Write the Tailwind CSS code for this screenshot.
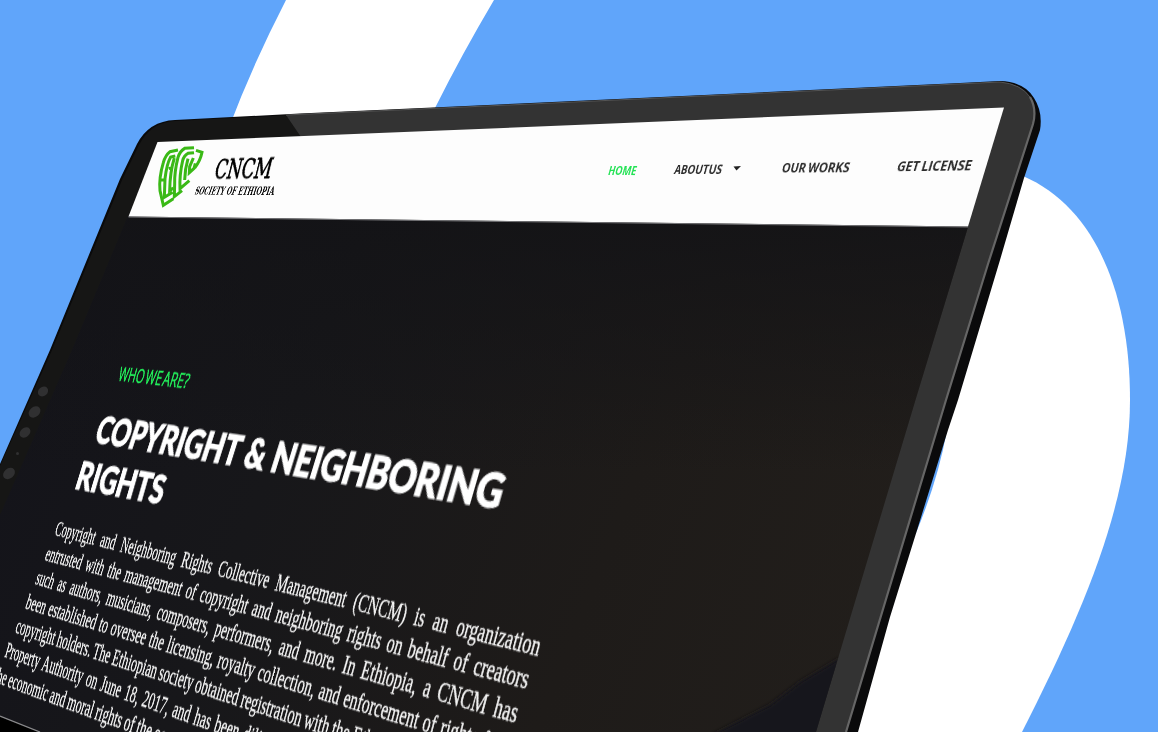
<!DOCTYPE html>
<html lang="en">
<head>
<meta charset="utf-8">
<title>CNCM Society of Ethiopia</title>
<script src="https://cdn.jsdelivr.net/npm/@tailwindcss/browser@4"></script>
</head>
<body class="bg-[#60a5fa]">
<main class="relative w-[1158px] h-[732px] overflow-hidden bg-[#60a5fa]">
  <svg class="absolute inset-0" width="1158" height="732" viewBox="0 0 1158 732">
    <defs>
      <linearGradient id="screen" x1="0" y1="0.3" x2="1" y2="0.55">
        <stop offset="0" stop-color="#13131a"/><stop offset=".3" stop-color="#17171a"/><stop offset=".6" stop-color="#1e1b19"/><stop offset="1" stop-color="#24201c"/>
      </linearGradient>
      <linearGradient id="shade" x1="0" y1="0" x2="0" y2="1">
        <stop offset="0" stop-color="#131316" stop-opacity=".85"/><stop offset=".5" stop-color="#131316" stop-opacity="0"/>
      </linearGradient>
      <filter id="soft"><feGaussianBlur stdDeviation="2"/></filter>
      <clipPath id="panel"><path d="M128 216L968 227L915.5 400L816 732H40L0 716V515L72 350Z"/></clipPath>
    </defs>
    <!-- white ribbons -->
    <path d="M286 0H494Q462 54 435 108L400 130H228Q252 66 286 0Z" fill="#fff"/>
    <path d="M1015 173C1090 200 1130 285 1130 400C1130 500 1086 606 1022 732H850L900 500L950 300Z" fill="#fff"/>
    <path d="M947 430Q938 480 916 533L920 500Z" fill="#60a5fa"/>
    <!-- tablet body -->
    <path d="M0 464L50 350L120 179L137 144Q149 121 175 120L300 113.500L520 103.500L960 83L1000 81Q1025 82 1034 98Q1043 112 1040 130L1024 178L1000 260L958 400L948 430L918 527L890 617L858 732H0Z" fill="#0a0a0b"/>
    <path d="M175 121L300 114.500L520 104.500L1000 82Q1021 84 1030 97Q1037 109 1033 124L988 264L946 400L846 732H0V466L52 350L122 180L139 145Q151 122 175 121Z" fill="#161615"/>
    <path d="M286 115L520 104.500L1000 82Q1021 84 1030 97Q1037 109 1033 124L988 264L946 400L846 732H800L930 300L968 110L301 137Z" fill="#333"/>
    <path d="M286 115L520 104.500L1000 82Q1021 84 1030 97Q1037 109 1033 124" fill="none" stroke="#555" stroke-width="1"/>
    <path d="M1030 97Q1037 109 1033 124L988 264L946 400L846 732" fill="none" stroke="#666" stroke-width="2.200"/>
    <g fill="#303031">
      <ellipse cx="43" cy="391.500" rx="5.500" ry="4.500" transform="rotate(-40 43 391.500)"/>
      <ellipse cx="34.500" cy="412" rx="6.500" ry="5" transform="rotate(-40 34.500 412)"/>
      <ellipse cx="25" cy="432.500" rx="6" ry="4.500" transform="rotate(-40 25 432.500)"/>
      <ellipse cx="9" cy="473.500" rx="6.500" ry="5" transform="rotate(-40 9 473.500)"/>
      <circle cx="17.500" cy="453.500" r="1.500"/>
    </g>
    <!-- screen -->
    <g clip-path="url(#panel)">
      <rect width="1158" height="732" fill="url(#screen)"/>
      <rect y="216" width="1158" height="516" fill="url(#shade)"/>
      <path d="M712 735L770 705L800 682L840 658V735Z" fill="#17151b" filter="url(#soft)"/>
    </g>
    <path d="M157.500 142L1004 107.500L968 226.500L128.500 216.500Z" fill="#fdfdfd"/>
    <path d="M128.500 217L968 227" stroke="#77777a" stroke-width="1"/>
    <path d="M0 717L38 732H0Z" fill="#000"/><path d="M0 716L40 732" stroke="#8a8a8d" stroke-width="1.300"/>
    <!-- shield -->
    <g transform="translate(120 100) scale(.33333)" fill="none" stroke="#3ab916" stroke-width="9">
      <path d="M174 150L150 155Q136 166 130 188Q116 235 120 272L130 316L160 296"/>
      <path d="M166 168L152 171Q140 192 135 236L133 292L158 277M120 240H134"/>
      <path d="M163 174Q150 215 149 272L160 264M146 206L156 203"/>
      <path d="M222 143L194 145Q180 153 174 172Q163 215 164 252L163 290L186 272"/>
      <path d="M222 158L204 160Q192 166 188 182Q178 225 180 266L208 242"/>
      <path d="M204 176Q195 206 194 240M220 174L209 200L208 218L222 205L226 190"/>
      <path d="M228 151L246 157Q241 183 224 204"/>
    </g>
    <path d="M733.500 166.500L741 166L736.500 170.500Z" fill="#222"/>
  </svg>
  <div id="copy" class="absolute inset-0"></div>
</main>
<script>
// Each line: text up to "|" spans the quad; the rest continues on the same plane.
// quad = bottom-left, bottom-right, top-right, top-left (baseline to cap height)
const H = "font-black text-white [font-family:'Lato',sans-serif] text-[34px] [-webkit-text-stroke:1px_white]";
const S = "text-[#f4f4f4] [font-family:'Liberation_Serif',serif] text-[24px] [-webkit-text-stroke:0.35px_#f4f4f4]";
const N = "font-bold text-[#2c2c2c] [font-family:'Open_Sans',sans-serif] text-[16px]";
const lines = [
  ["CNCM", "text-black [font-family:'DejaVu_Serif',serif] text-[28px] [-webkit-text-stroke:0.8px_black]", [213,179, 270,178.5, 275,158, 218,159.5], 0],
  ["SOCIETY OF ETHIOPIA", "font-bold text-[#111] [font-family:'DejaVu_Serif',serif] text-[14px]", [194,194.5, 273.5,195, 276,186.5, 197,186.5], 0],
  ["HOME", "font-bold text-[#22e254] [font-family:'Open_Sans',sans-serif] text-[16px]", [607.5,174.8, 635.5,175.2, 638,166, 610,166], 0],
  ["ABOUTUS", N, [673.5,174, 721,174, 723.5,164.5, 676,165], 0],
  ["OUR WORKS", N, [781,172.5, 848.5,172.3, 851,162.3, 783.5,163], -1],
  ["GET LICENSE", N, [896,171.3, 970.5,170.3, 973.5,160, 899,161.5], -1],
  ["WHO WE ARE?", "text-[#22f05a] [font-family:'Open_Sans',sans-serif] text-[22px] [-webkit-text-stroke:0.5px_#22f05a]", [117.5,380.5, 187,388.5, 191.500,374, 121,367], -3],
  ["COPYRIGHT & NEIGHBORING", H, [93,443, 498.5,510, 508.5,475, 102,416], 0],
  ["RIGHTS", H, [73.5,489, 160.5,505, 168.5,476.5, 82,461.5], 0],
  ["Copyright and Neighboring Rights Collective Management (CNCM) is an organization", S, [54,535, 538,656, 543,637.5, 58,521.5], 7],
  ["entrusted with the management of copyright and neighboring rights on behalf of creators", S, [44,560, 526.5,689, 531.5,670.4, 48.5,546.6], 3.2],
  ["such as authors, musicians, composers, performers, and more. In Ethiopia, a CNCM has", S, [34.5,584, 515.5,723, 520.5,703.9, 39,570.4], 4.2],
  ["been established to oversee the licensing, royalty collection, and enforcement| of rights for", S, [24.5,608.3, 416.5,729, 421,711.7, 29,594.6], 1],
  ["copyright holders. The Ethiopian society obtained registration| with the Ethiopian", S, [14.5,632.5, 299.5,726.5, 304,710, 18.5,618.5], -1],
  ["Property Authority on June 18, 2017,| and has been diligently protecting", S, [4,656.5, 167,715, 171.5,699.5, 8,642.5], 2],
  ["the economic and moral rights| of the economic", S, [-7,681.5, 120,728.5, 124.5,713, -3,667.5], -1],
];
// Homography from the unit square to a quad
function square(p) {
  const [x0,y0,x1,y1,x2,y2,x3,y3] = p;
  const dx1=x1-x2, dx2=x3-x2, dx3=x0-x1+x2-x3, dy1=y1-y2, dy2=y3-y2, dy3=y0-y1+y2-y3;
  const d = dx1*dy2-dx2*dy1, g = (dx3*dy2-dx2*dy3)/d, h = (dx1*dy3-dx3*dy1)/d;
  return [x1-x0+g*x1, x3-x0+h*x3, x0, y1-y0+g*y1, y3-y0+h*y3, y0, g, h, 1];
}
const ctx = document.createElement("canvas").getContext("2d");
const copy = document.getElementById("copy");
function draw() {
  copy.replaceChildren();
  for (const [text, cls, quad, ws] of lines) {
    const el = document.createElement("div");
    el.className = "absolute left-0 top-0 origin-top-left whitespace-nowrap leading-none " + cls;
    el.style.wordSpacing = ws + "px";
    const [a, b] = text.split("|");
    const span = document.createElement("span");
    span.textContent = a;
    el.append(span, b || "");
    copy.append(el);
    const cs = getComputedStyle(el);
    ctx.font = `${cs.fontWeight} ${cs.fontSize} ${cs.fontFamily}`;
    const m = ctx.measureText("H"), cap = m.actualBoundingBoxAscent;
    const base = (parseFloat(cs.fontSize) - m.fontBoundingBoxAscent - m.fontBoundingBoxDescent) / 2 + m.fontBoundingBoxAscent;
    const w = span.getBoundingClientRect().width;
    const [A,B,C,D,E,F,G,K,I] = square(quad);
    // u = x / w, v = (base - y) / cap
    const col = (p, q, r) => [p / w, -q / cap, r + q * base / cap];
    const X = col(A,B,C), Y = col(D,E,F), W = col(G,K,I);
    el.style.transform = `matrix3d(${[X[0],Y[0],0,W[0], X[1],Y[1],0,W[1], 0,0,1,0, X[2],Y[2],0,W[2]].map(n => (n / W[2]).toFixed(9)).join(",")})`;
  }
}
// Redraw once the stylesheet and fonts have settled
draw();
addEventListener("load", draw);
document.fonts.ready.then(draw);
new MutationObserver(draw).observe(document.head, { childList: true, subtree: true });
requestAnimationFrame(() => { draw(); setTimeout(draw, 50); });
</script>
</body>
</html>
